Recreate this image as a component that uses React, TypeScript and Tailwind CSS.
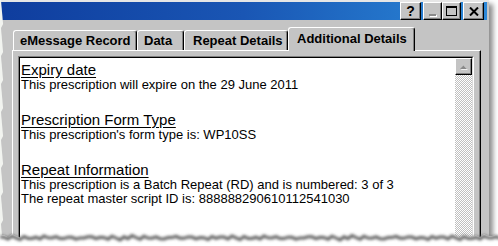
import React from 'react';

type Tab = { label: string; width: number; pad: number };

const tabs: Tab[] = [
  { label: 'eMessage Record', width: 124, pad: 6 },
  { label: 'Data', width: 47, pad: 6 },
  { label: 'Repeat Details', width: 104, pad: 8 },
];

const sections = [
  { title: 'Expiry date', lines: ['This prescription will expire on the 29 June 2011'] },
  { title: 'Prescription Form Type', lines: ["This prescription's form type is: WP10SS"] },
  {
    title: 'Repeat Information',
    lines: [
      'This prescription is a Batch Repeat (RD) and is numbered: 3 of 3',
      'The repeat master script ID is: 888888290610112541030',
    ],
  },
];

function CaptionButton({ w, className, children }: { w: string; className?: string; children: React.ReactNode }) {
  return (
    <div
      className={`${w} h-[18px] bg-[#c4c4c4] border border-t-white border-l-white border-r-black border-b-black shadow-[inset_-1px_-1px_#808080] flex items-center justify-center ${className ?? ''}`}
    >
      {children}
    </div>
  );
}

function TitleBar() {
  return (
    <div className="h-[24px] mr-[2px] bg-gradient-to-r from-[#0f3d9e] via-[#1a56b4] to-[#2c88d8] flex items-center justify-end pr-[3px]">
      <CaptionButton w="w-[21px]" className="mr-[2px]">
        <span className="text-[14px] font-bold leading-none text-black">?</span>
      </CaptionButton>
      <CaptionButton w="w-[19px]">
        <div className="mt-[8px] w-[7px] h-[2px] bg-[#8a8a8a] shadow-[1px_1px_#ffffff]" />
      </CaptionButton>
      <CaptionButton w="w-[19px]" className="mr-[2px]">
        <div className="w-[11px] h-[10px] border border-black border-t-2" />
      </CaptionButton>
      <CaptionButton w="w-[21px]">
        <svg width="10" height="9" viewBox="0 0 10 9">
          <path d="M1 0.5 L9 8.5 M9 0.5 L1 8.5" stroke="#000" strokeWidth="2" />
        </svg>
      </CaptionButton>
    </div>
  );
}

// jagged paper edge along the bottom, with its soft shadow
function TornEdge() {
  const pts: string[] = [];
  for (let i = 0; i <= 125; i++) {
    const x = i * 4;
    const y = 9 + (((i * 37) % 11) / 11) * 3.2 - ((i * 13) % 5) * 0.35;
    pts.push(`${x},${y.toFixed(1)}`);
  }
  const line = pts.join(' ');
  return (
    <svg className="absolute left-0 bottom-0" width="498" height="20" viewBox="0 0 498 20">
      <defs>
        <filter id="blur" x="-5%" y="-100%" width="110%" height="300%">
          <feGaussianBlur stdDeviation="1.6" />
        </filter>
      </defs>
      <polygon points={`${line} 498,20 0,20`} fill="#ffffff" />
      <polyline points={line} fill="none" stroke="#5e5e5e" strokeWidth="3" transform="translate(0,2)" filter="url(#blur)" />
    </svg>
  );
}

// ragged left side of the cut
function TornLeft() {
  const pts: string[] = [];
  for (let i = 0; i <= 62; i++) {
    const y = i * 4;
    const x = 1 + (((i * 29) % 7) / 7) * 2.4;
    pts.push(`${x.toFixed(1)},${y}`);
  }
  return (
    <svg className="absolute left-0 top-0" width="6" height="246" viewBox="0 0 6 246">
      <polygon points={`0,0 ${pts.join(' ')} 0,246`} fill="#f2f4f0" />
    </svg>
  );
}

export default function App() {
  return (
    <div className="relative w-[498px] h-[246px] overflow-hidden bg-white font-['Liberation_Sans',Arial,sans-serif]">
      <div className="w-[489px] h-[246px] bg-[#c4c4c4] border-t-2 border-[#e6e6e6] shadow-[4px_4px_5px_rgba(0,0,0,0.45)] flex flex-col">
        <TitleBar />

        <div className="mt-[7px] pl-[13px] h-[23px] flex items-end">
          {tabs.map((t) => (
            <div
              key={t.label}
              style={{ width: t.width, paddingLeft: t.pad }}
              className="h-[20px] leading-[20px] text-[13px] font-bold text-black whitespace-nowrap border-t border-l border-white border-r border-r-black shadow-[inset_-1px_0_#808080] rounded-t-[3px]"
            >
              {t.label}
            </div>
          ))}
          <div className="relative z-10 w-[127px] h-[24px] -mb-[1px] pl-[8px] pt-[1px] leading-[20px] text-[13px] font-bold text-black whitespace-nowrap bg-[#c4c4c4] border-t border-l border-white border-r border-r-black shadow-[inset_-1px_0_#808080] rounded-t-[3px]">
            Additional Details
          </div>
        </div>

        <div className="ml-[12px] w-[469px] flex-1 border-t border-l border-white border-r border-r-black shadow-[inset_-1px_0_#808080] pl-[5px] pt-[5px]">
          <div className="w-[456px] h-[200px] border border-t-[#808080] border-l-[#808080] border-r-white border-b-white">
            <div className="h-full border border-t-black border-l-black border-r-[#dcdcdc] border-b-[#dcdcdc] flex bg-white">
              <div className="flex-1 pl-[1px] pt-[3px] text-black">
                {sections.map((s) => (
                  <div key={s.title} className="mb-[19px]">
                    <div className="text-[15px] leading-[17px] underline underline-offset-[2px]">{s.title}</div>
                    {s.lines.map((l) => (
                      <div key={l} className="text-[13px] leading-[14px] whitespace-nowrap">
                        {l}
                      </div>
                    ))}
                  </div>
                ))}
              </div>
              <div className="w-[17px] flex flex-col">
                <div className="h-[17px] bg-[#c4c4c4] border border-t-white border-l-white border-r-black border-b-black shadow-[inset_-1px_-1px_#808080] flex items-center justify-center">
                  <svg width="9" height="6" viewBox="0 0 9 6">
                    <path d="M1 5 L4.5 1.5 L8 5 Z" fill="#ffffff" transform="translate(0.8,0.8)" />
                    <path d="M1 5 L4.5 1.5 L8 5 Z" fill="#8a8a8a" />
                  </svg>
                </div>
                <div className="flex-1 bg-[repeating-conic-gradient(#c0c0c0_0%_25%,#ffffff_0%_50%)] bg-[length:2px_2px]" />
              </div>
            </div>
          </div>
        </div>
      </div>
      <TornLeft />
      <TornEdge />
    </div>
  );
}
